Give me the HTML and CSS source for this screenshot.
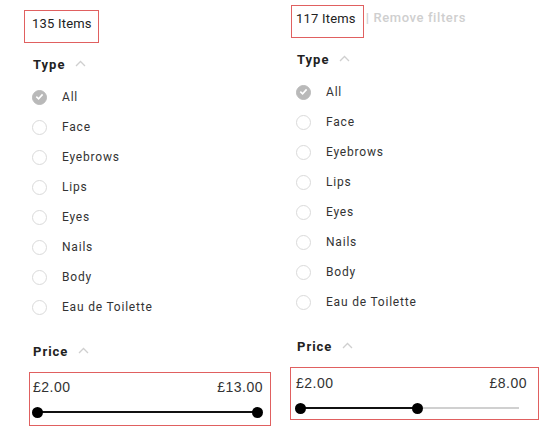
FILE: index.html
```html
<!DOCTYPE html>
<html>
<head>
<meta charset="utf-8">
<link rel="stylesheet" href="styles.css">
</head>
<body>
<div class="page">
  <section class="panel panel--left">
    <div class="count-row">
      <div class="count">135 Items</div>
    </div>
    <div class="facet-head">Type <svg class="chev" width="11" height="7" viewBox="0 0 11 7"><path d="M1 6 L5.5 1.5 L10 6" fill="none" stroke="#cfcfcf" stroke-width="1.3"/></svg></div>
    <ul class="opts">
      <li class="opt opt--on"><span class="radio"><svg width="15" height="15" viewBox="0 0 15 15"><path d="M4.3 7.7 L6.6 9.9 L10.6 5.4" fill="none" stroke="#fff" stroke-width="1.6"/></svg></span>All</li>
      <li class="opt"><span class="radio"></span>Face</li>
      <li class="opt"><span class="radio"></span>Eyebrows</li>
      <li class="opt"><span class="radio"></span>Lips</li>
      <li class="opt"><span class="radio"></span>Eyes</li>
      <li class="opt"><span class="radio"></span>Nails</li>
      <li class="opt"><span class="radio"></span>Body</li>
      <li class="opt"><span class="radio"></span>Eau de Toilette</li>
    </ul>
    <div class="facet-head facet-head--price">Price <svg class="chev" width="11" height="7" viewBox="0 0 11 7"><path d="M1 6 L5.5 1.5 L10 6" fill="none" stroke="#cfcfcf" stroke-width="1.3"/></svg></div>
    <div class="price">
      <div class="price-vals"><span>£2.00</span><span>£13.00</span></div>
      <div class="track">
        <div class="fill" style="left:0%;width:100%"></div>
        <span class="thumb" style="left:0%"></span>
        <span class="thumb" style="left:100%"></span>
      </div>
    </div>
  </section>
  <section class="panel panel--right">
    <div class="count-row">
      <div class="count count--narrow">117 Items</div>
      <div class="remove">| Remove filters</div>
    </div>
    <div class="facet-head">Type <svg class="chev" width="11" height="7" viewBox="0 0 11 7"><path d="M1 6 L5.5 1.5 L10 6" fill="none" stroke="#cfcfcf" stroke-width="1.3"/></svg></div>
    <ul class="opts">
      <li class="opt opt--on"><span class="radio"><svg width="15" height="15" viewBox="0 0 15 15"><path d="M4.3 7.7 L6.6 9.9 L10.6 5.4" fill="none" stroke="#fff" stroke-width="1.6"/></svg></span>All</li>
      <li class="opt"><span class="radio"></span>Face</li>
      <li class="opt"><span class="radio"></span>Eyebrows</li>
      <li class="opt"><span class="radio"></span>Lips</li>
      <li class="opt"><span class="radio"></span>Eyes</li>
      <li class="opt"><span class="radio"></span>Nails</li>
      <li class="opt"><span class="radio"></span>Body</li>
      <li class="opt"><span class="radio"></span>Eau de Toilette</li>
    </ul>
    <div class="facet-head facet-head--price">Price <svg class="chev" width="11" height="7" viewBox="0 0 11 7"><path d="M1 6 L5.5 1.5 L10 6" fill="none" stroke="#cfcfcf" stroke-width="1.3"/></svg></div>
    <div class="price">
      <div class="price-vals"><span>£2.00</span><span>£8.00</span></div>
      <div class="track">
        <div class="fill" style="left:0%;width:53.6%"></div>
        <span class="thumb" style="left:0%"></span>
        <span class="thumb" style="left:53.6%"></span>
      </div>
    </div>
  </section>
</div>
</body>
</html>
```

FILE: styles.css
```css
* { box-sizing: border-box; }
html, body { margin: 0; padding: 0; background: #fff; }
body {
  font-family: Roboto, "Liberation Sans", sans-serif;
  color: #333;
}
.page {
  display: flex;
  gap: 18px;
  padding-left: 24px;
}
.panel { display: flex; flex-direction: column; }
.panel--left { width: 248px; padding-top: 10px; --inset: 8px; }
.panel--right { width: 250px; padding-top: 5px; --inset: 6px; }

.count-row { display: flex; align-items: flex-start; height: 33px; }
.count {
  height: 33px;
  box-shadow: inset 0 0 0 1px #e06060;
  font-size: 13px;
  line-height: 16px;
  padding: 6px 7px 0 8px;
  color: #222;
  letter-spacing: 0.2px;
}
.count--narrow {
  margin-left: 1px;
  padding: 6px 8px 0 5px;
}
.remove {
  font-size: 13px;
  line-height: 16px;
  padding-top: 5px;
  margin-left: 2px;
  color: #cfcfcf;
  font-weight: 500;
  letter-spacing: 0.6px;
}

.facet-head {
  margin-top: 11px;
  height: 20px;
  display: flex;
  align-items: center;
  padding-left: 7px;
  font-size: 13px;
  font-weight: 700;
  letter-spacing: 1px;
  color: #222;
}
.panel--left .facet-head { padding-left: 9px; }
.chev { margin-left: 10px; margin-top: -2px; }
.facet-head--price { margin-top: 19px; }

.opts { list-style: none; margin: 8px 0 0; padding: 0; }
.opt {
  height: 30px;
  display: flex;
  align-items: center;
  padding-left: var(--inset);
  font-size: 12px;
  font-weight: 400;
  letter-spacing: 0.8px;
  color: #333;
}
.radio {
  width: 15px;
  height: 15px;
  border-radius: 50%;
  border: 1.5px solid #dadada;
  margin-right: 15px;
  flex: none;
  position: relative;
}
.radio svg { position: absolute; left: -1.5px; top: -1.5px; }
.opt--on .radio { background: #b9b9b9; border-color: #b9b9b9; }

.price {
  margin-top: 11px;
  border: 1px solid #e06060;
  height: 54px;
  padding: 6px 7px 0 3px;
}
.panel--left .price { margin-left: 5px; width: 242px; }
.panel--right .price { margin-left: 0; width: 249px; height: 53px; padding: 7px 11px 0 5px; }
.price-vals {
  display: flex;
  justify-content: space-between;
  font-family: "Liberation Sans", Arial, sans-serif;
  font-size: 14px;
  line-height: 16px;
  letter-spacing: 0.5px;
  color: #333;
}
.track {
  position: relative;
  height: 2px;
  background: #d0d0d0;
}
.panel--left .track { margin: 16px 6px 0 4px; }
.panel--right .track { margin: 16px 8px 0 4px; }
.fill { position: absolute; top: 0; height: 2px; background: #111; }
.thumb {
  position: absolute;
  top: 1px;
  width: 11px;
  height: 11px;
  margin: -5.5px 0 0 -5.5px;
  border-radius: 50%;
  background: #000;
}
```
